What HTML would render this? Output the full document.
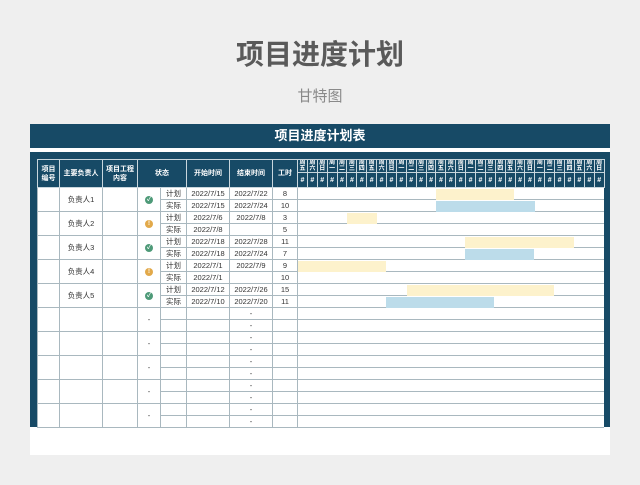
<!DOCTYPE html>
<html><head><meta charset="utf-8"><style>
*{margin:0;padding:0;box-sizing:border-box}
body{width:640px;height:485px;background:#efefef;font-family:"Liberation Sans","Noto Sans CJK SC",sans-serif;position:relative;overflow:hidden}
.t1{position:absolute;left:0;width:640px;top:36px;text-align:center;font-size:28px;font-weight:bold;color:#5a5a5a;line-height:38px}
.t2{position:absolute;left:0;width:640px;top:88px;text-align:center;font-size:15px;color:#8a8a8a;line-height:18px}
.card{position:absolute;left:30px;top:124px;width:580px;height:331px;background:#fff}
.bar{position:absolute;left:0;top:0;width:580px;height:24px;background:#174a66;color:#fff;font-weight:bold;font-size:13px;text-align:center;line-height:24px}
.frame{position:absolute;left:0;top:28px;width:580px;height:275px;background:#174a66}
table{position:absolute;left:37px;top:159px;border-collapse:collapse;table-layout:fixed;width:567px}
td{border:1px solid #a9b8bf;background:#fff;font-size:7.5px;color:#333;text-align:center;height:12px;line-height:10px;padding:0;overflow:hidden;white-space:nowrap}
th{background:#174a66;color:#fff;font-size:7px;font-weight:bold;border:1px solid #c8d6dd;padding:0;line-height:9px;overflow:hidden;white-space:nowrap}
td.g{border-left:none;border-right:none}
.gh{height:13px;font-size:6px;line-height:6px;vertical-align:top}
.gh2{height:15px;font-size:7px}
.ok,.wa{display:inline-block;width:8px;height:8px;border-radius:50%;color:#fff;font-size:6px;line-height:8px;font-weight:bold;vertical-align:middle}
.ok{background:#4e9a78}.wa{background:#e2a94a}
.b{position:absolute;height:11px}
.y{background:#fdf2cc}.bl{background:#bcdcea}
</style></head><body>
<div class="t1">项目进度计划</div>
<div class="t2">甘特图</div>
<div class="card"><div class="bar">项目进度计划表</div><div class="frame"></div></div>
<table>
<colgroup><col style="width:22px"><col style="width:43px"><col style="width:35px"><col style="width:23px"><col style="width:26px"><col style="width:43px"><col style="width:43px"><col style="width:25px">
<col span="31" style="width:9.9px"></colgroup>
<tr><th rowspan="2">项目<br>编号</th><th rowspan="2">主要负责人</th><th rowspan="2">项目工程<br>内容</th><th rowspan="2" colspan="2">状态</th><th rowspan="2">开始时间</th><th rowspan="2">结束时间</th><th rowspan="2">工时</th>
<th class="gh">周<br>五</th><th class="gh">周<br>六</th><th class="gh">周<br>日</th><th class="gh">周<br>一</th><th class="gh">周<br>二</th><th class="gh">周<br>三</th><th class="gh">周<br>四</th><th class="gh">周<br>五</th><th class="gh">周<br>六</th><th class="gh">周<br>日</th><th class="gh">周<br>一</th><th class="gh">周<br>二</th><th class="gh">周<br>三</th><th class="gh">周<br>四</th><th class="gh">周<br>五</th><th class="gh">周<br>六</th><th class="gh">周<br>日</th><th class="gh">周<br>一</th><th class="gh">周<br>二</th><th class="gh">周<br>三</th><th class="gh">周<br>四</th><th class="gh">周<br>五</th><th class="gh">周<br>六</th><th class="gh">周<br>日</th><th class="gh">周<br>一</th><th class="gh">周<br>二</th><th class="gh">周<br>三</th><th class="gh">周<br>四</th><th class="gh">周<br>五</th><th class="gh">周<br>六</th><th class="gh">周<br>日</th></tr>
<tr><th class="gh2">#</th><th class="gh2">#</th><th class="gh2">#</th><th class="gh2">#</th><th class="gh2">#</th><th class="gh2">#</th><th class="gh2">#</th><th class="gh2">#</th><th class="gh2">#</th><th class="gh2">#</th><th class="gh2">#</th><th class="gh2">#</th><th class="gh2">#</th><th class="gh2">#</th><th class="gh2">#</th><th class="gh2">#</th><th class="gh2">#</th><th class="gh2">#</th><th class="gh2">#</th><th class="gh2">#</th><th class="gh2">#</th><th class="gh2">#</th><th class="gh2">#</th><th class="gh2">#</th><th class="gh2">#</th><th class="gh2">#</th><th class="gh2">#</th><th class="gh2">#</th><th class="gh2">#</th><th class="gh2">#</th><th class="gh2">#</th></tr>
<tr><td rowspan="2"></td><td rowspan="2">负责人1</td><td rowspan="2"></td><td rowspan="2"><span class="ok">✓</span></td><td>计划</td><td>2022/7/15</td><td>2022/7/22</td><td>8</td><td class="g" colspan="31"></td></tr>
<tr><td>实际</td><td>2022/7/15</td><td>2022/7/24</td><td>10</td><td class="g" colspan="31"></td></tr>
<tr><td rowspan="2"></td><td rowspan="2">负责人2</td><td rowspan="2"></td><td rowspan="2"><span class="wa">!</span></td><td>计划</td><td>2022/7/6</td><td>2022/7/8</td><td>3</td><td class="g" colspan="31"></td></tr>
<tr><td>实际</td><td>2022/7/8</td><td></td><td>5</td><td class="g" colspan="31"></td></tr>
<tr><td rowspan="2"></td><td rowspan="2">负责人3</td><td rowspan="2"></td><td rowspan="2"><span class="ok">✓</span></td><td>计划</td><td>2022/7/18</td><td>2022/7/28</td><td>11</td><td class="g" colspan="31"></td></tr>
<tr><td>实际</td><td>2022/7/18</td><td>2022/7/24</td><td>7</td><td class="g" colspan="31"></td></tr>
<tr><td rowspan="2"></td><td rowspan="2">负责人4</td><td rowspan="2"></td><td rowspan="2"><span class="wa">!</span></td><td>计划</td><td>2022/7/1</td><td>2022/7/9</td><td>9</td><td class="g" colspan="31"></td></tr>
<tr><td>实际</td><td>2022/7/1</td><td></td><td>10</td><td class="g" colspan="31"></td></tr>
<tr><td rowspan="2"></td><td rowspan="2">负责人5</td><td rowspan="2"></td><td rowspan="2"><span class="ok">✓</span></td><td>计划</td><td>2022/7/12</td><td>2022/7/26</td><td>15</td><td class="g" colspan="31"></td></tr>
<tr><td>实际</td><td>2022/7/10</td><td>2022/7/20</td><td>11</td><td class="g" colspan="31"></td></tr>
<tr><td rowspan="2"></td><td rowspan="2"></td><td rowspan="2"></td><td rowspan="2">-</td><td></td><td></td><td>-</td><td></td><td class="g" colspan="31"></td></tr>
<tr><td></td><td></td><td>-</td><td></td><td class="g" colspan="31"></td></tr>
<tr><td rowspan="2"></td><td rowspan="2"></td><td rowspan="2"></td><td rowspan="2">-</td><td></td><td></td><td>-</td><td></td><td class="g" colspan="31"></td></tr>
<tr><td></td><td></td><td>-</td><td></td><td class="g" colspan="31"></td></tr>
<tr><td rowspan="2"></td><td rowspan="2"></td><td rowspan="2"></td><td rowspan="2">-</td><td></td><td></td><td>-</td><td></td><td class="g" colspan="31"></td></tr>
<tr><td></td><td></td><td>-</td><td></td><td class="g" colspan="31"></td></tr>
<tr><td rowspan="2"></td><td rowspan="2"></td><td rowspan="2"></td><td rowspan="2">-</td><td></td><td></td><td>-</td><td></td><td class="g" colspan="31"></td></tr>
<tr><td></td><td></td><td>-</td><td></td><td class="g" colspan="31"></td></tr>
<tr><td rowspan="2"></td><td rowspan="2"></td><td rowspan="2"></td><td rowspan="2">-</td><td></td><td></td><td>-</td><td></td><td class="g" colspan="31"></td></tr>
<tr><td></td><td></td><td>-</td><td></td><td class="g" colspan="31"></td></tr>
</table>
<div class="b y" style="left:436px;top:189px;width:78px"></div>
<div class="b bl" style="left:436px;top:201px;width:99px"></div>
<div class="b y" style="left:347px;top:213px;width:30px"></div>
<div class="b y" style="left:465px;top:237px;width:109px"></div>
<div class="b bl" style="left:465px;top:249px;width:69px"></div>
<div class="b y" style="left:298px;top:261px;width:88px"></div>
<div class="b y" style="left:407px;top:285px;width:147px"></div>
<div class="b bl" style="left:386px;top:297px;width:108px"></div>
</body></html>
